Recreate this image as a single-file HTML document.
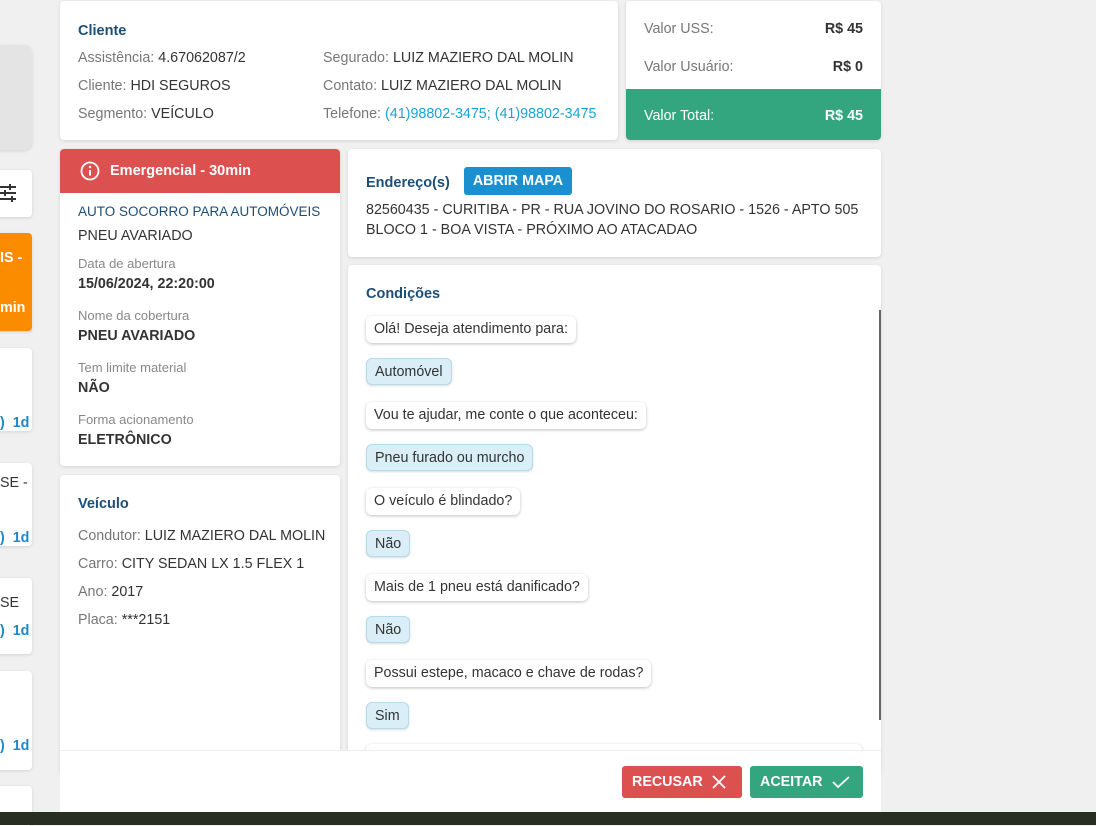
<!DOCTYPE html>
<html><head><meta charset="utf-8"><style>
*{box-sizing:border-box;margin:0;padding:0}
body{width:1096px;height:825px;background:#f0f0f0;font-family:"Liberation Sans",sans-serif;font-size:14.3px;color:#333;position:relative;overflow:hidden}
.c{position:absolute;background:#fff;border-radius:4px;box-shadow:0 1px 3px rgba(0,0,0,.12)}
.a{position:absolute;white-space:nowrap}
.t{color:#1d4e75;font-weight:bold;font-size:14.5px}
.g{color:#777}
.l{color:#888;font-size:13px}
.b{font-weight:bold;color:#333}
.bub{position:absolute;left:366px;height:27px;line-height:27px;padding:0 8px;border-radius:6px;background:#fff;box-shadow:0 1px 3px rgba(0,0,0,.25);white-space:nowrap;color:#333}
.ans{background:#daeef8;border:1px solid #b6dbea;box-shadow:0 1px 2px rgba(0,0,0,.15)}
</style></head><body>
<div class="c" style="left:-10px;top:45px;width:42px;height:105px;background:#e4e4e4;border-radius:8px"></div>
<div class="c" style="left:-10px;top:170px;width:42px;height:47px"></div>
<svg class="a" style="left:0;top:183px" width="18" height="20" viewBox="0 0 18 20"><g stroke="#333" stroke-width="2"><path d="M0 4H16M0 10H16M0 16H16"/><path d="M10 1V7M5 7V13M12 13V19"/></g></svg>
<div class="c" style="left:-10px;top:233px;width:42px;height:98px;background:#fb8c00"></div>
<div class="a" style="left:0;top:250px;color:#fff;font-weight:bold">IS -</div>
<div class="a" style="left:0;top:300px;color:#fff;font-weight:bold">min</div>
<div class="c" style="left:-10px;top:348px;width:42px;height:83px"></div>
<div class="c" style="left:-10px;top:463px;width:42px;height:83px"></div>
<div class="c" style="left:-10px;top:578px;width:42px;height:76px"></div>
<div class="c" style="left:-10px;top:671px;width:42px;height:99px"></div>
<div class="c" style="left:-10px;top:786px;width:42px;height:40px"></div>
<div class="a" style="left:0;top:475px">SE -</div>
<div class="a" style="left:0;top:595px">SE</div>
<div class="a" style="left:0;top:415px;color:#1e88c7;font-weight:bold">) &nbsp;1d</div>
<div class="a" style="left:0;top:530px;color:#1e88c7;font-weight:bold">) &nbsp;1d</div>
<div class="a" style="left:0;top:623px;color:#1e88c7;font-weight:bold">) &nbsp;1d</div>
<div class="a" style="left:0;top:738px;color:#1e88c7;font-weight:bold">) &nbsp;1d</div>

<div class="c" style="left:60px;top:1px;width:558px;height:139px"></div>
<div class="a t" style="left:78px;top:23px">Cliente</div>
<div class="a" style="left:78px;top:50px"><span class="g">Assistência:</span> 4.67062087/2</div>
<div class="a" style="left:78px;top:78px"><span class="g">Cliente:</span> HDI SEGUROS</div>
<div class="a" style="left:78px;top:106px"><span class="g">Segmento:</span> VEÍCULO</div>
<div class="a" style="left:323px;top:50px"><span class="g">Segurado:</span> LUIZ MAZIERO DAL MOLIN</div>
<div class="a" style="left:323px;top:78px"><span class="g">Contato:</span> LUIZ MAZIERO DAL MOLIN</div>
<div class="a" style="left:323px;top:106px"><span class="g">Telefone:</span> <span style="color:#1ea0d6">(41)98802-3475; (41)98802-3475</span></div>

<div class="c" style="left:626px;top:1px;width:255px;height:139px;overflow:hidden"><div style="position:absolute;left:0;top:88px;width:255px;height:51px;background:#34a67f"></div></div>
<div class="a g" style="left:644px;top:21px">Valor USS:</div><div class="a b" style="right:233px;top:21px">R$ 45</div>
<div class="a g" style="left:644px;top:59px">Valor Usuário:</div><div class="a b" style="right:233px;top:59px">R$ 0</div>
<div class="a" style="left:644px;top:108px;color:#fff">Valor Total:</div><div class="a" style="right:233px;top:108px;color:#fff;font-weight:bold">R$ 45</div>

<div class="c" style="left:60px;top:149px;width:280px;height:317px;overflow:hidden"><div style="height:44px;background:#dc5050"></div></div>
<svg class="a" style="left:80px;top:161px" width="20" height="20" viewBox="0 0 20 20"><circle cx="10" cy="10" r="8.5" fill="none" stroke="#fff" stroke-width="1.8"/><path d="M10 9V14.5" stroke="#fff" stroke-width="2"/><circle cx="10" cy="6" r="1.2" fill="#fff"/></svg>
<div class="a" style="left:110px;top:163px;color:#fff;font-weight:bold;font-size:14.5px">Emergencial - 30min</div>
<div class="a" style="left:78px;top:204px;color:#1d4e75;font-size:13.5px">AUTO SOCORRO PARA AUTOMÓVEIS</div>
<div class="a" style="left:78px;top:228px">PNEU AVARIADO</div>
<div class="a l" style="left:78px;top:256px">Data de abertura</div>
<div class="a b" style="left:78px;top:276px">15/06/2024, 22:20:00</div>
<div class="a l" style="left:78px;top:308px">Nome da cobertura</div>
<div class="a b" style="left:78px;top:328px">PNEU AVARIADO</div>
<div class="a l" style="left:78px;top:360px">Tem limite material</div>
<div class="a b" style="left:78px;top:380px">NÃO</div>
<div class="a l" style="left:78px;top:412px">Forma acionamento</div>
<div class="a b" style="left:78px;top:432px">ELETRÔNICO</div>

<div class="c" style="left:60px;top:475px;width:280px;height:300px"></div>
<div class="a t" style="left:78px;top:496px">Veículo</div>
<div class="a" style="left:78px;top:528px"><span class="g">Condutor:</span> LUIZ MAZIERO DAL MOLIN</div>
<div class="a" style="left:78px;top:556px"><span class="g">Carro:</span> CITY SEDAN LX 1.5 FLEX 1</div>
<div class="a" style="left:78px;top:584px"><span class="g">Ano:</span> 2017</div>
<div class="a" style="left:78px;top:612px"><span class="g">Placa:</span> ***2151</div>

<div class="c" style="left:348px;top:149px;width:533px;height:108px"></div>
<div class="a t" style="left:366px;top:175px">Endereço(s)</div>
<div class="a" style="left:464px;top:167px;width:108px;height:28px;background:#1a90d0;border-radius:3px;color:#fff;font-weight:bold;text-align:center;line-height:28px">ABRIR MAPA</div>
<div class="a" style="left:366px;top:202px">82560435 - CURITIBA - PR - RUA JOVINO DO ROSARIO - 1526 - APTO 505</div>
<div class="a" style="left:366px;top:222px">BLOCO 1 - BOA VISTA - PRÓXIMO AO ATACADAO</div>

<div class="c" style="left:348px;top:265px;width:533px;height:510px"></div>
<div class="a t" style="left:366px;top:286px">Condições</div>
<div class="a" style="left:879px;top:310px;width:2px;height:410px;background:#666"></div>
<div class="bub" style="top:316px">Olá! Deseja atendimento para:</div>
<div class="bub ans" style="top:358px">Automóvel</div>
<div class="bub" style="top:402px">Vou te ajudar, me conte o que aconteceu:</div>
<div class="bub ans" style="top:444px">Pneu furado ou murcho</div>
<div class="bub" style="top:488px">O veículo é blindado?</div>
<div class="bub ans" style="top:530px">Não</div>
<div class="bub" style="top:574px">Mais de 1 pneu está danificado?</div>
<div class="bub ans" style="top:616px">Não</div>
<div class="bub" style="top:660px">Possui estepe, macaco e chave de rodas?</div>
<div class="bub ans" style="top:702px">Sim</div>
<div class="bub" style="top:744px;width:496px"></div>

<div class="a" style="left:60px;top:750px;width:821px;height:62px;background:#fff;border-top:1px solid #eee"></div>
<div class="a" style="left:622px;top:766px;width:120px;height:32px;background:#dc5050;border-radius:3px;color:#fff;font-weight:bold;line-height:32px;padding-left:10px">RECUSAR</div>
<svg class="a" style="left:711px;top:774px" width="16" height="16"><path d="M2 2L14 14M14 2L2 14" stroke="#fff" stroke-width="1.8"/></svg>
<div class="a" style="left:750px;top:766px;width:113px;height:32px;background:#34a67f;border-radius:3px;color:#fff;font-weight:bold;line-height:32px;padding-left:10px">ACEITAR</div>
<svg class="a" style="left:831px;top:774px" width="20" height="16"><path d="M2 8L7 13L18 3" fill="none" stroke="#fff" stroke-width="1.8"/></svg>
<div class="a" style="left:0;top:812px;width:1096px;height:13px;background:#2a2d22"></div>
</body></html>
